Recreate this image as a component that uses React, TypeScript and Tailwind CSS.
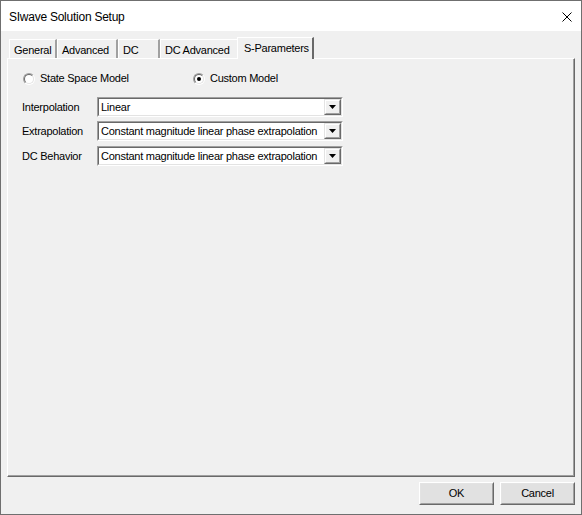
import React from "react";

const font = { fontFamily: '"Liberation Sans", Arial, sans-serif' };

function Radio({ checked, label }: { checked?: boolean; label: string }) {
  return (
    <div className="flex items-center">
      {/* sunken round button: shadow on the upper-left, light on the lower-right */}
      <div className="shrink-0 w-[12px] h-[12px] mr-[5px] rounded-full border border-t-[#a0a0a0] border-l-[#a0a0a0] border-b-white border-r-white">
        <div className="w-full h-full rounded-full bg-white border border-t-[#696969] border-l-[#696969] border-b-[#e3e3e3] border-r-[#e3e3e3] flex items-center justify-center">
          {checked && <div className="w-[4px] h-[4px] rounded-full bg-black" />}
        </div>
      </div>
      <span>{label}</span>
    </div>
  );
}

function Combo({ value }: { value: string }) {
  return (
    <div className="w-[246px] h-[20px] border-t border-l border-t-[#a0a0a0] border-l-[#a0a0a0] border-b border-r border-b-white border-r-white">
      <div className="h-full flex border-t border-l border-t-[#696969] border-l-[#696969] border-b border-r border-b-[#e3e3e3] border-r-[#e3e3e3] bg-white">
        <div className="flex-1 flex items-center pl-[2px] leading-none">{value}</div>
        <div className="w-[17px] h-full border-t border-l border-t-[#e3e3e3] border-l-[#e3e3e3] border-b border-r border-b-[#696969] border-r-[#696969]">
          <div className="w-full h-full flex items-center justify-center bg-[#f0f0f0] border-t border-l border-t-white border-l-white border-b border-r border-b-[#a0a0a0] border-r-[#a0a0a0]">
            <svg width="7" height="4" viewBox="0 0 7 4">
              <path d="M0 0 H7 L3.5 4 Z" fill="#000000" />
            </svg>
          </div>
        </div>
      </div>
    </div>
  );
}

function Tab({ label, w, selected }: { label: string; w: number; selected?: boolean }) {
  if (selected) {
    return (
      <div
        className="relative z-10 -mx-[2px] -mb-px h-[22px] bg-[#f0f0f0] border-t border-l border-t-white border-l-white border-r-2 border-r-[#696969] flex items-start pl-[6px] pt-[2px]"
        style={{ width: w + 4 }}
      >
        {label}
      </div>
    );
  }
  return (
    <div
      className="h-[19px] bg-[#f0f0f0] border-t border-l border-t-white border-l-white border-r-2 border-r-[#a0a0a0] flex items-center pl-[4px] pt-[2px]"
      style={{ width: w }}
    >
      {label}
    </div>
  );
}

function Button({ label }: { label: string }) {
  return (
    <div className="w-[75px] h-[23px] border border-t-white border-l-white border-b-[#696969] border-r-[#696969]">
      <div className="w-full h-full flex items-center justify-center border border-t-[#e3e3e3] border-l-[#e3e3e3] border-b-[#a0a0a0] border-r-[#a0a0a0] bg-[#e1e1e1]">
        {label}
      </div>
    </div>
  );
}

export default function App() {
  return (
    <div
      className="w-[582px] h-[515px] flex flex-col border border-[#6f6f6f] bg-[#f0f0f0] text-[11px] tracking-[-0.25px] text-black"
      style={font}
    >
      <div className="h-[30px] bg-white flex items-center justify-between pl-[8px] pr-[9px] pt-[1px]">
        <span className="text-[12px]">SIwave Solution Setup</span>
        <svg width="10" height="10" viewBox="0 0 10 10">
          <path d="M0.5 0.5 L9.5 9.5 M9.5 0.5 L0.5 9.5" stroke="#000000" strokeWidth="1" />
        </svg>
      </div>

      <div className="flex-1 flex flex-col pt-[6px] pl-[6px] pr-[6px]">
        <div className="flex items-end h-[21px] pl-[2px]">
          <Tab label="General" w={48} />
          <Tab label="Advanced" w={61} />
          <Tab label="DC" w={42} />
          <Tab label="DC Advanced" w={79} />
          <Tab label="S-Parameters" w={73} selected />
        </div>

        <div className="h-[419px] border-t border-l border-t-white border-l-white border-b border-r border-b-[#696969] border-r-[#696969]">
          <div className="h-full border-b border-r border-b-[#a0a0a0] border-r-[#a0a0a0] pt-[13px] pl-[14px]">
            <div className="flex items-center h-[13px]">
              <div className="w-[171px] pl-[1px]">
                <Radio label="State Space Model" />
              </div>
              <Radio checked label="Custom Model" />
            </div>

            <div className="mt-[12px] flex flex-col gap-[5px]">
              <div className="flex items-center">
                <span className="w-[75px]">Interpolation</span>
                <Combo value="Linear" />
              </div>
              <div className="flex items-center -mt-px">
                <span className="w-[75px]">Extrapolation</span>
                <Combo value="Constant magnitude linear phase extrapolation" />
              </div>
              <div className="flex items-center">
                <span className="w-[75px]">DC Behavior</span>
                <Combo value="Constant magnitude linear phase extrapolation" />
              </div>
            </div>
          </div>
        </div>

        <div className="flex justify-end gap-[6px] mt-[5px]">
          <Button label="OK" />
          <Button label="Cancel" />
        </div>
      </div>
    </div>
  );
}
